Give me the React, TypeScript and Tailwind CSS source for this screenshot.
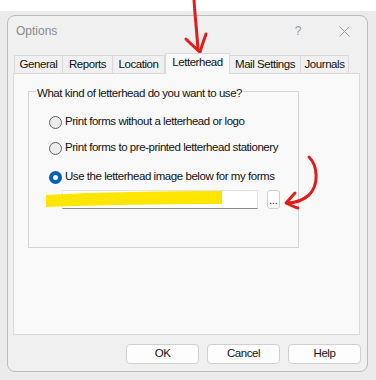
import React from 'react'

const TABS: { label: string; w: string; active?: boolean }[] = [
  { label: 'General', w: 'w-[49px]' },
  { label: 'Reports', w: 'w-[50px]' },
  { label: 'Location', w: 'w-[52px]' },
  { label: 'Letterhead', w: 'w-[65px]', active: true },
  { label: 'Mail Settings', w: 'w-[71px]' },
  { label: 'Journals', w: 'w-[48px]' },
]

const OPTIONS = [
  { label: 'Print forms without a letterhead or logo', gap: '' },
  { label: 'Print forms to pre-printed letterhead stationery', gap: 'mt-[12px]' },
  { label: 'Use the letterhead image below for my forms', gap: 'mt-[15px]', checked: true },
]

function Radio({ checked }: { checked?: boolean }) {
  if (checked) {
    return (
      <span className="w-[13px] h-[13px] rounded-full bg-[#005fb8] flex items-center justify-center shrink-0">
        <span className="w-[5px] h-[5px] rounded-full bg-white" />
      </span>
    )
  }
  return <span className="w-[13px] h-[13px] rounded-full border border-[#5f5f5f] bg-[#ececec] shrink-0" />
}

export default function App() {
  return (
    <div className="relative w-[376px] h-[380px] bg-[#ebebeb] overflow-hidden font-['Liberation_Sans',Arial,sans-serif] text-[11.5px] tracking-[-0.45px] text-[#111]">
      <div className="h-[11px] bg-white" />

      {/* Dialog window */}
      <div className="ml-[7px] mt-[4px] w-[361px] h-[357px] bg-[#f0f0f0] border border-[#bcbcbc] rounded-[8px] flex flex-col">
        {/* Title bar */}
        <div className="h-[30px] flex items-center pl-[8px]">
          <span className="text-[#8a8a8a] text-[12px] tracking-normal">Options</span>
          <div className="ml-auto flex">
            <span className="w-[46px] h-[30px] flex items-center justify-center text-[#9a9a9a] text-[12px] tracking-normal">?</span>
            <span className="w-[46px] h-[30px] flex items-center justify-center">
              <svg width="11" height="11" viewBox="0 0 11 11">
                <path d="M0.5 0.5 L10.5 10.5 M10.5 0.5 L0.5 10.5" stroke="#9a9a9a" strokeWidth="1" />
              </svg>
            </span>
          </div>
        </div>

        {/* Tabs */}
        <div className="mt-[7px] ml-[6px] h-[20px] flex items-end">
          {TABS.map((t, i) => (
            <div
              key={t.label}
              className={`${t.w} flex items-center justify-center whitespace-nowrap border-t border-r border-[#d9d9d9] ${i === 0 ? 'border-l' : ''} ${
                t.active
                  ? 'h-[21px] -mb-px relative z-10 bg-[#f9f9f9] border-l pb-[3px]'
                  : 'h-[18px] bg-[#f0f0f0] pt-[1px]'
              }`}
            >
              {t.label}
            </div>
          ))}
        </div>

        {/* Tab panel */}
        <div className="ml-[5px] w-[347px] h-[262px] bg-[#f9f9f9] border border-[#dadada]">
          <div className="relative ml-[14px] mt-[17px] w-[271px] h-[157px] border border-[#d3d3d3]">
            <span className="absolute left-[7px] top-[-6px] px-[1px] bg-[#f9f9f9] leading-[14px]">
              What kind of letterhead do you want to use?
            </span>
            <div className="pl-[20px] pt-[23px] flex flex-col">
              {OPTIONS.map(o => (
                <div key={o.label} className={`h-[14px] flex items-center gap-[3px] ${o.gap}`}>
                  <Radio checked={o.checked} />
                  <span>{o.label}</span>
                </div>
              ))}
              <div className="mt-[6px] ml-[13px] flex items-center gap-[9px]">
                <div className="w-[196px] h-[19px] bg-white border border-[#e3e3e3] border-b-[#8a8a8a]" />
                <div className="w-[13px] h-[19px] rounded-[3px] bg-[#fdfdfd] border border-[#cfcfcf] flex items-end justify-center pb-[2px] text-[10px] leading-none tracking-normal">
                  ...
                </div>
              </div>
            </div>
          </div>
        </div>

        {/* Buttons */}
        <div className="mt-[9px] pr-[6px] flex justify-end gap-[8px]">
          {['OK', 'Cancel', 'Help'].map(b => (
            <button
              key={b}
              className="w-[73px] h-[20px] bg-[#fdfdfd] border border-[#d0d0d0] rounded-[4px] flex items-center justify-center"
            >
              {b}
            </button>
          ))}
        </div>
      </div>

      {/* Annotation marks drawn over the screenshot */}
      <svg className="absolute inset-0 pointer-events-none" width="376" height="380" viewBox="0 0 376 380">
        <path
          d="M46 195 C100 192 160 191 222 191 L222 204 C160 204 100 205 46 207 Z"
          fill="#ffe600"
        />
        <path d="M194 0 C195 16 197 33 198 50" stroke="#e21b1b" strokeWidth="3" fill="none" strokeLinecap="round" />
        <path d="M186 39 C191 44 195 48 200 52 C202 45 204 40 206 34" stroke="#e21b1b" strokeWidth="3" fill="none" strokeLinecap="round" strokeLinejoin="round" />
        <path d="M309 157 C318 166 319 185 309 195 C302 201 295 203 287 203" stroke="#e21b1b" strokeWidth="3" fill="none" strokeLinecap="round" />
        <path d="M295 193 C292 196 289 200 286 203 C290 205 294 207 298 208" stroke="#e21b1b" strokeWidth="3" fill="none" strokeLinecap="round" strokeLinejoin="round" />
      </svg>
    </div>
  )
}
